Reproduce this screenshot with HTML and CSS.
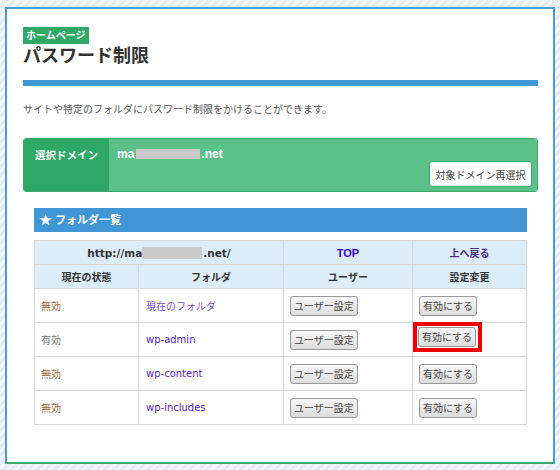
FILE: index.html
```html
<!DOCTYPE html>
<html lang="ja">
  <head>
    <meta charset="UTF-8" />
    <title>パスワード制限</title>
    <link rel="stylesheet" href="styles.css">
  </head>
  <body>
    <div class="panel">
      <span class="home-badge">ホームページ</span>
      <h1 class="page-title">パスワード制限</h1>
      <div class="title-bar"></div>

      <p class="lead">サイトや特定のフォルダにパスワード制限をかけることができます。</p>

      <!-- Selected domain -->
      <div class="domain-box">
        <div class="domain-label">選択ドメイン</div>
        <div class="domain-body">
          <div class="domain-name">ma<span class="mask mask-domain"></span>.net</div>
          <button class="reselect-btn">対象ドメイン再選択</button>
        </div>
      </div>

      <!-- Folder list -->
      <div class="folder-section">
        <div class="folder-head"><span class="star">★</span> フォルダ一覧</div>
        <table class="folder-table">
          <colgroup>
            <col class="c-state" />
            <col class="c-folder" />
            <col class="c-user" />
            <col class="c-change" />
          </colgroup>
          <tr class="head-row">
            <th colspan="2" class="url-cell">http://ma<span class="mask mask-url"></span>.net/</th>
            <th><a href="#" class="top-link">TOP</a></th>
            <th><a href="#" class="up-link">上へ戻る</a></th>
          </tr>
          <tr class="head-row">
            <th>現在の状態</th>
            <th>フォルダ</th>
            <th>ユーザー</th>
            <th>設定変更</th>
          </tr>
          <tr>
            <td class="off">無効</td>
            <td><a href="#" class="folder-link current">現在のフォルダ</a></td>
            <td><button class="gray-btn">ユーザー設定</button></td>
            <td><button class="gray-btn">有効にする</button></td>
          </tr>
          <tr>
            <td class="on">有効</td>
            <td><a href="#" class="folder-link">wp-admin</a></td>
            <td><button class="gray-btn">ユーザー設定</button></td>
            <td><span class="highlight"><button class="gray-btn">有効にする</button></span></td>
          </tr>
          <tr>
            <td class="off">無効</td>
            <td><a href="#" class="folder-link">wp-content</a></td>
            <td><button class="gray-btn">ユーザー設定</button></td>
            <td><button class="gray-btn">有効にする</button></td>
          </tr>
          <tr>
            <td class="off">無効</td>
            <td><a href="#" class="folder-link">wp-includes</a></td>
            <td><button class="gray-btn">ユーザー設定</button></td>
            <td><button class="gray-btn">有効にする</button></td>
          </tr>
        </table>
      </div>
    </div>
  </body>
</html>
```

FILE: styles.css
```css
body {
  margin: 0;
  padding: 7px 0 0 5px;
  font-family: "Liberation Sans", "Noto Sans CJK JP", sans-serif;
  color: #333;
  background: repeating-linear-gradient(
    135deg,
    #f4f8fc 0,
    #f4f8fc 3px,
    #e1ecf6 3px,
    #e1ecf6 6px
  );
  height: 470px;
  box-sizing: border-box;
}

/* Main panel */
.panel {
  box-sizing: border-box;
  width: 550px;
  height: 457px;
  background: #fff;
  border: 2px solid #4a9ad8;
  border-bottom-color: #3eaa6a;
  padding: 16px 15px 0 16px;
}

.home-badge {
  display: inline-block;
  background: #2fa866;
  color: #fff;
  font-size: 10px;
  font-weight: bold;
  line-height: 17px;
  padding: 0 3px;
}

.page-title {
  margin: 0;
  font-size: 18px;
  line-height: 25px;
  font-weight: bold;
  color: #333;
}

.title-bar {
  height: 6px;
  background: #4196d5;
  margin-top: 11px;
}

.lead {
  margin: 17px 0 0;
  font-size: 10px;
  line-height: 14px;
  color: #555;
}

/* Domain box */
.domain-box {
  display: flex;
  margin-top: 21px;
  height: 54px;
  border: 1px solid #3ba96c;
  border-radius: 3px;
  overflow: hidden;
  box-sizing: border-box;
}

.domain-label {
  width: 85px;
  background: #2fa866;
  color: #fff;
  font-size: 10.5px;
  font-weight: bold;
  padding: 8px 0 0 11px;
  box-sizing: border-box;
}

.domain-body {
  flex: 1;
  background: #5bc189;
  display: flex;
  flex-direction: column;
  align-items: flex-start;
  padding: 8px 5px 4px 8px;
}

.domain-name {
  color: #fff;
  font-size: 12px;
  font-weight: bold;
  line-height: 14px;
}

.mask {
  display: inline-block;
  background: #cacaca;
  vertical-align: middle;
}

.mask-domain {
  width: 64px;
  height: 10px;
  margin: -2px 1px 0 2px;
}

.reselect-btn {
  margin-top: auto;
  align-self: flex-end;
  height: 26px;
  width: 103px;
  padding: 0;
  background: #fff;
  border: 1px solid #3ba96c;
  border-radius: 3px;
  font-family: inherit;
  font-size: 10px;
  color: #444;
}

/* Folder list */
.folder-section {
  margin: 16px 11px 0;
}

.folder-head {
  background: #4196d5;
  color: #fff;
  font-size: 11px;
  font-weight: bold;
  line-height: 23px;
  padding-left: 5px;
}

.star {
  font-size: 13px;
}

.folder-table {
  margin-top: 8px;
  width: 100%;
  border-collapse: collapse;
  table-layout: fixed;
  font-size: 10px;
}

.c-state { width: 104px; }
.c-folder { width: 145px; }
.c-user { width: 129px; }

.folder-table th,
.folder-table td {
  border: 1px solid #d6d6d6;
  padding: 0 6px;
}

.head-row th {
  background: #dcecf8;
  height: 23px;
  font-weight: bold;
  color: #333;
  text-align: center;
}

.url-cell {
  font-family: "DejaVu Sans", "Noto Sans CJK JP", sans-serif;
  font-size: 10.5px;
}

.mask-url {
  width: 60px;
  height: 12px;
  margin: -2px 1px 0 0;
}

.top-link {
  color: #3300cc;
  text-decoration: none;
  font-size: 11px;
}

.up-link {
  color: #4a2a86;
  text-decoration: none;
}

.folder-table td {
  height: 33px;
}

.off {
  color: #a2693c;
}

.on {
  color: #777;
}

.folder-link {
  font-family: "DejaVu Sans", "Noto Sans CJK JP", sans-serif;
  color: #5522dd;
  text-decoration: none;
  font-size: 10px;
  padding-left: 1px;
}

.folder-link.current {
  font-family: "Liberation Sans", "Noto Sans CJK JP", sans-serif;
  color: #7a4fd8;
}

.gray-btn {
  height: 20px;
  padding: 0 3px;
  font-family: inherit;
  font-size: 10px;
  color: #444;
  background: linear-gradient(#f8f8f8, #dcdcdc);
  border: 1px solid #999;
  border-radius: 3px;
}

.highlight {
  display: inline-block;
  vertical-align: middle;
  border: 4px solid #ee0000;
  padding: 1px 2px 1px 1px;
  margin: -6px 0 0 -6px;
}

.highlight .gray-btn {
  display: block;
}
```
